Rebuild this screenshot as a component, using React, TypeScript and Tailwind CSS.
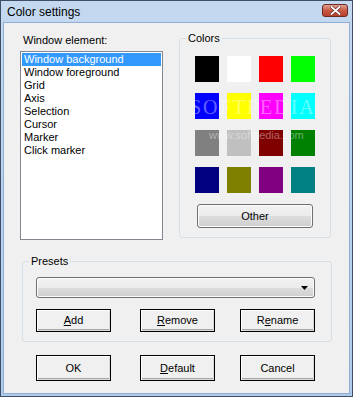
import React from "react";

const ELEMENTS = [
  "Window background",
  "Window foreground",
  "Grid",
  "Axis",
  "Selection",
  "Cursor",
  "Marker",
  "Click marker",
];

const SWATCHES = [
  "#000000", "#ffffff", "#ff0000", "#00ff00",
  "#0000ff", "#ffff00", "#ff00ff", "#00ffff",
  "#808080", "#c0c0c0", "#800000", "#008000",
  "#000080", "#808000", "#800080", "#008080",
];

function ClassicButton({ children, className = "" }: { children: React.ReactNode; className?: string }) {
  return (
    <button
      className={`flex items-center justify-center border border-black bg-[#f0f0f0] text-[11px] text-black shadow-[inset_1px_1px_0_#ffffff,inset_-1px_-1px_0_#d8d8d8,inset_0_-2px_0_#a8a8a8] ${className}`}
    >
      {children}
    </button>
  );
}

function GroupBox({ label, className = "", children }: { label: string; className?: string; children: React.ReactNode }) {
  return (
    <div className={`relative rounded-[3px] border border-[#d5dfe5] ${className}`}>
      <span className="absolute -top-[8px] left-[6px] bg-[#f0f0f0] px-[2px] text-[11px] leading-[14px] text-black">
        {label}
      </span>
      {children}
    </div>
  );
}

export default function App() {
  return (
    <div
      className="flex h-[397px] w-[353px] flex-col border border-[#3c4f66] bg-[linear-gradient(#c4d9f0,#b0cbea)]"
      style={{ fontFamily: '"Liberation Sans", Arial, sans-serif' }}
    >
      {/* Title bar */}
      <div className="flex h-[21px] items-center justify-between pl-[6px] pr-[4px]">
        <span className="text-[12px] text-black">Color settings</span>
        <div className="flex h-[13px] w-[26px] -translate-y-[1px] items-center justify-center rounded-[3px] border border-[#6b2a22] bg-[linear-gradient(#e0a392,#c85a45_50%,#b8402c)]">
          <svg width="11" height="9" viewBox="0 0 11 9">
            <path d="M1.5 1 L9.5 8 M9.5 1 L1.5 8" stroke="#6b2a22" strokeWidth="3.2" strokeLinecap="square" />
            <path d="M1.5 1 L9.5 8 M9.5 1 L1.5 8" stroke="#ffffff" strokeWidth="1.8" strokeLinecap="square" />
          </svg>
        </div>
      </div>

      {/* Body */}
      <div className="mx-[2px] mb-[2px] flex-1 border border-[#8eaed6] bg-[#f0f0f0] text-black">
        <div className="flex items-start pl-[16px] pt-[11px]">
          {/* Left column */}
          <div className="flex w-[143px] flex-col">
            <span className="h-[13px] pl-[3px] text-[11px] leading-[13px]">Window element:</span>
            <div className="mt-[4px] h-[189px] border border-[#828790] bg-white p-[1px]">
              {ELEMENTS.map((e, i) => (
                <div
                  key={e}
                  className={`h-[13px] pl-[2px] text-[11px] leading-[13px] ${
                    i === 0 ? "bg-[#3399ff] text-white" : "text-black"
                  }`}
                >
                  {e}
                </div>
              ))}
            </div>
          </div>

          {/* Colors group */}
          <GroupBox label="Colors" className="ml-[16px] mt-[4px] w-[152px] pb-[9px] pt-[17px]">
            <div className="relative overflow-hidden">
              <div className="ml-[15px] grid grid-cols-[repeat(4,24px)] gap-x-[8px] gap-y-[11px]">
                {SWATCHES.map((c) => (
                  <div key={c} className="h-[26px] w-[24px]" style={{ backgroundColor: c }} />
                ))}
              </div>
              {/* watermark */}
              <div
                className="pointer-events-none absolute left-[10px] top-[40px] whitespace-nowrap text-[20px] leading-[22px] tracking-[2px] text-white/40"
                style={{ fontFamily: '"Liberation Serif", serif' }}
              >
                SOFTPEDIA<span className="align-top text-[7px]">™</span>
              </div>
              <div className="pointer-events-none absolute left-[29px] top-[71px] text-[11px] text-white/40">
                www.softpedia.com
              </div>
            </div>
            <button className="ml-[17px] mt-[11px] flex h-[24px] w-[116px] items-center justify-center rounded-[3px] border border-[#707070] bg-[linear-gradient(#f2f2f2,#ebebeb_50%,#dddddd_50%,#cfcfcf)] text-[11px] shadow-[inset_0_0_0_1px_#fcfcfc]">
              Other
            </button>
          </GroupBox>
        </div>

        {/* Presets group */}
        <GroupBox label="Presets" className="ml-[18px] mt-[21px] w-[310px] pb-[9px] pl-[13px] pt-[15px]">
          <div className="flex h-[21px] w-[279px] items-center justify-end rounded-[3px] border border-[#707070] bg-[linear-gradient(#f2f2f2,#ebebeb_50%,#dddddd_50%,#cfcfcf)] pr-[6px] shadow-[inset_0_0_0_1px_#fcfcfc]">
            <svg width="7" height="4" viewBox="0 0 7 4">
              <path d="M0 0 H7 L3.5 4 Z" fill="#000" />
            </svg>
          </div>
          <div className="mt-[11px] flex">
            <ClassicButton className="h-[23px] w-[75px]">
              <u>A</u>dd
            </ClassicButton>
            <ClassicButton className="ml-[29px] h-[23px] w-[75px]">
              <u>R</u>emove
            </ClassicButton>
            <ClassicButton className="ml-[25px] h-[23px] w-[75px]">
              R<u>e</u>name
            </ClassicButton>
          </div>
        </GroupBox>

        {/* Bottom buttons */}
        <div className="ml-[32px] mt-[13px] flex">
          <ClassicButton className="h-[26px] w-[75px]">OK</ClassicButton>
          <ClassicButton className="ml-[29px] h-[26px] w-[75px]">
            <u>D</u>efault
          </ClassicButton>
          <ClassicButton className="ml-[25px] h-[26px] w-[75px]">Cancel</ClassicButton>
        </div>
      </div>
    </div>
  );
}
